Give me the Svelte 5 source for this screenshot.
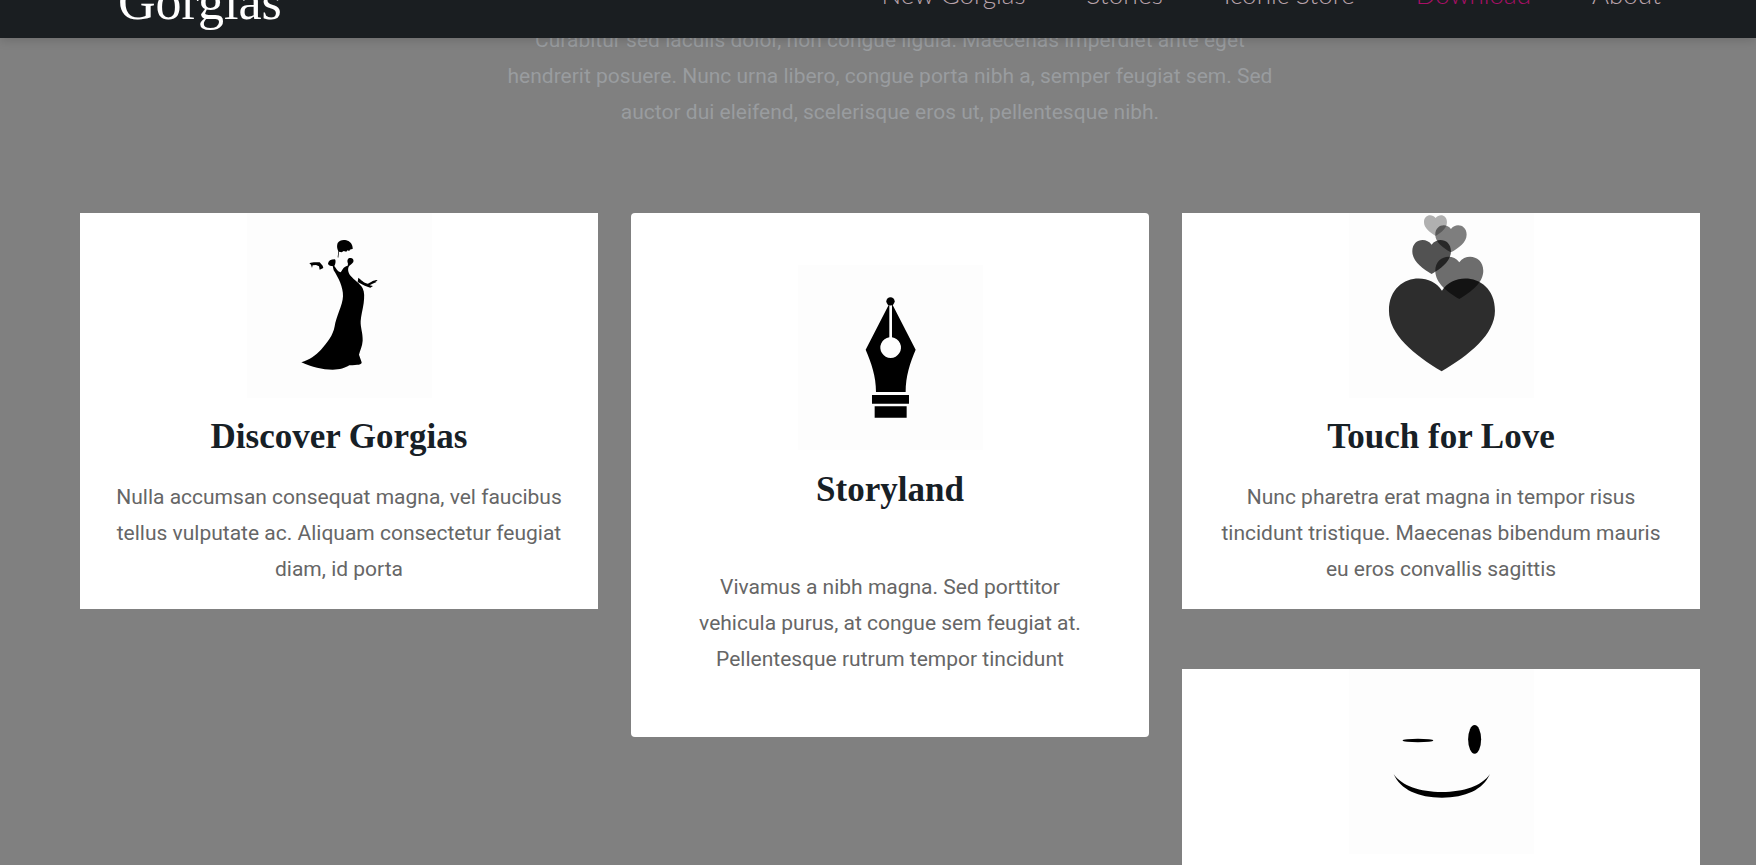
<script>
  const links = [
    { label: 'New Gorgias' },
    { label: 'Stories' },
    { label: 'Iconic Store' },
    { label: 'Download', accent: true },
    { label: 'About' }
  ];

  const columns = [
    [
      {
        icon: 'dress',
        title: 'Discover Gorgias',
        text: 'Nulla accumsan consequat magna, vel faucibus tellus vulputate ac. Aliquam consectetur feugiat diam, id porta'
      }
    ],
    [
      {
        icon: 'pen',
        roomy: true,
        title: 'Storyland',
        text: 'Vivamus a nibh magna. Sed porttitor vehicula purus, at congue sem feugiat at. Pellentesque rutrum tempor tincidunt'
      }
    ],
    [
      {
        icon: 'hearts',
        title: 'Touch for Love',
        text: 'Nunc pharetra erat magna in tempor risus tincidunt tristique. Maecenas bibendum mauris eu eros convallis sagittis'
      },
      { icon: 'wink' }
    ]
  ];
</script>

<div class="page">
  <header>
    <a class="brand" href="#top">Gorgias</a>
    <nav>
      {#each links as link}
        <a href="#top" class:accent={link.accent}>{link.label}</a>
      {/each}
    </nav>
  </header>

  <main>
    <p class="intro">
      Curabitur sed iaculis dolor, non congue ligula. Maecenas imperdiet ante eget hendrerit posuere.
      Nunc urna libero, congue porta nibh a, semper feugiat sem. Sed auctor dui eleifend, scelerisque
      eros ut, pellentesque nibh.
    </p>

    <div class="grid">
      {#each columns as column}
        <div class="column">
          {#each column as card}
            <article class="card" class:roomy={card.roomy}>
              <svg class="art" viewBox="0 0 185 185" aria-hidden="true">
                {#if card.icon === 'dress'}
                  <g transform="translate(33 7) scale(.3333)">
                    <path d="M173 69C178 61 189 58 199 61C211 64 219 74 218 87L210 88L208 93L202 91L199 95L191 93L185 97L177 95L175 113L173 112L175 94C171 87 170 77 173 69Z" />
                    <path d="M177 68H209L216 87L204 90L189 92L178 94Z" />
                    <path d="M144 131C145 122 152 118 165 118C168 122 167 132 163 138C169 146 173 155 182 157C187 151 189 140 203 137L204 131C200 120 204 114 211 114C219 114 222 120 220 126C217 132 209 135 206 140C202 150 206 161 213 169C222 180 239 189 248 205C254 217 253 232 251 250C248 271 243 288 242 304C241 322 249 340 248 362C247 379 240 391 237 404L245 427C245 435 235 435 208 436C195 444 180 449 158 449C126 449 97 442 64 427C89 419 107 406 123 389C142 368 159 347 164 319C168 291 188 256 189 229C190 202 175 173 161 151L158 138C151 138 145 136 144 131Z" />
                    <path d="M88 130C98 125 111 127 119 127L128 137L130 144L119 149L117 139L108 135L98 136L96 144L93 134Z" />
                    <path d="M235 173C242 178 251 189 263 191C274 187 279 180 293 180L286 186L291 185L276 192L269 196L279 198L271 203C259 201 249 195 240 190L233 186Z" />
                  </g>
                {:else if card.icon === 'pen'}
                  <g transform="translate(-8 -10) scale(.3333)">
                    <circle cx="301.500" cy="139" r="12.500" />
                    <path d="M296 150H298V247A31 31 0 1 0 306 247V150H308L377 284C360 324 347 363 347 411H258C258 363 244 324 227 284Z" />
                    <path d="M246 420H357V446H246ZM254 454H350V488H254Z" />
                  </g>
                {:else if card.icon === 'hearts'}
                  <g transform="translate(-8.700 -8) scale(.3333)">
                    <path fill-opacity=".3" d="M286 39C275 25 251 29 251 51C251 69 268 82 286 93C305 81 320 69 320 51C320 29 297 25 286 39Z" />
                    <path fill-opacity=".5" d="M332 72C317 52 285 60 285 89C285 112 308 128 332 142C356 128 379 112 379 89C379 60 347 52 332 72Z" />
                    <path fill-opacity=".68" d="M274 119C256 95 216 103 216 139C216 168 246 191 274 207C303 191 332 168 332 139C332 103 292 95 274 119Z" />
                    <path fill-opacity=".57" d="M357 172C335 142 285 154 285 197C285 233 320 260 357 282C393 260 429 233 429 197C429 154 379 142 357 172Z" />
                    <path fill-opacity=".825" d="M305 257C264 194 146 213 146 317C146 389 222 449 304 499C386 450 464 389 464 317C464 213 346 194 305 257Z" />
                  </g>
                {:else}
                  <g transform="translate(-8.700 -9) scale(.3333)">
                    <ellipse cx="233" cy="241.500" rx="46" ry="5" />
                    <ellipse cx="403" cy="238" rx="19.500" ry="43" />
                    <path d="M160 342C184 378 240 396 305 396C370 396 425 378 449 342C429 389 375 413 305 413C235 413 180 389 160 342Z" />
                  </g>
                {/if}
              </svg>
              {#if card.title}
                <h2>{card.title}</h2>
                <p>{card.text}</p>
              {/if}
            </article>
          {/each}
        </div>
      {/each}
    </div>
  </main>
</div>

<style>
  :global(body) {
    margin: 0;
    background: #808080;
  }

  .page {
    height: 100vh;
    overflow: hidden;
    font-family: Roboto, sans-serif;
    font-size: 21px;
    line-height: 36px;
  }

  header {
    position: relative;
    z-index: 1;
    box-sizing: border-box;
    height: 38px;
    padding: 0 95px 0 118px;
    display: flex;
    align-items: flex-end;
    justify-content: space-between;
    background: #1a1e21;
    box-shadow: 0 2px 10px rgba(0, 0, 0, 0.16);
    clip-path: inset(0 0 -20px 0);
  }

  header a {
    text-decoration: none;
  }

  .brand {
    padding-bottom: 4px;
    color: #fff;
    font: 52px/64px 'Liberation Serif', serif;
  }

  nav {
    display: flex;
    gap: 61px;
    padding-bottom: 26px;
  }

  nav a {
    color: #b9a3ab;
    font-family: Lato, sans-serif;
    font-weight: 300;
    font-size: 26px;
    white-space: nowrap;
  }

  nav a.accent {
    color: #a80f66;
  }

  main {
    padding: 0 56px 0 80px;
  }

  .intro {
    max-width: 780px;
    margin: -16px auto 83px;
    color: #999c9f;
    text-align: center;
  }

  .grid {
    display: grid;
    grid-template-columns: repeat(3, 1fr);
    gap: 33px;
    align-items: start;
  }

  .column {
    display: flex;
    flex-direction: column;
    gap: 60px;
  }

  .card {
    padding: 0 32px 22px;
    background: #fff;
    text-align: center;
  }

  .card.roomy {
    padding: 52px 64px 60px;
    border-radius: 4px;
  }

  .art {
    display: block;
    width: 185px;
    margin: 0 auto;
    background: #fdfdfd;
  }

  h2 {
    margin: 15px 0 18px;
    color: #172026;
    font: bold 35px/48px 'Liberation Serif', serif;
  }

  .roomy h2 {
    margin: 16px 0 55px;
  }

  .card p {
    margin: 0;
    color: #666;
  }
</style>
